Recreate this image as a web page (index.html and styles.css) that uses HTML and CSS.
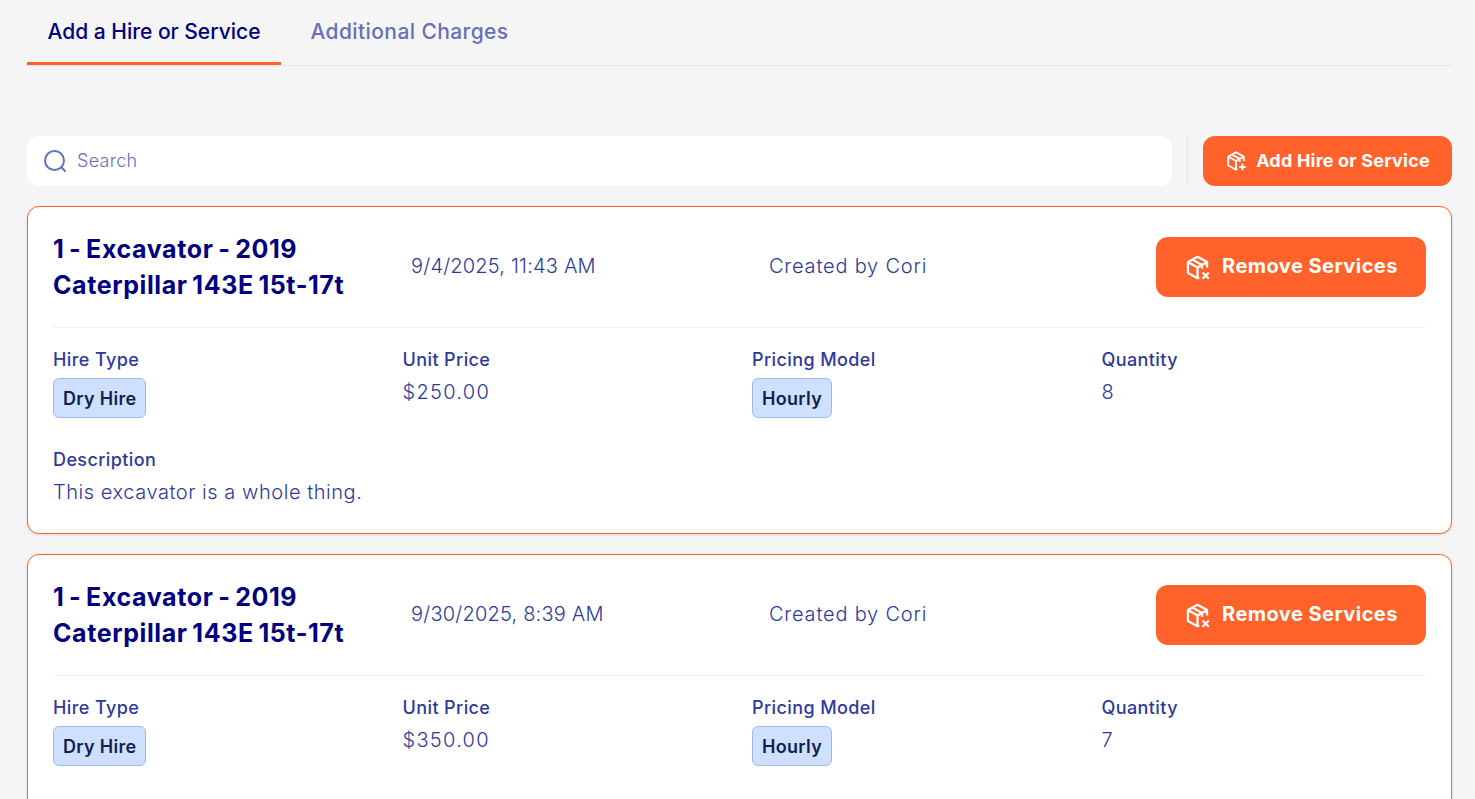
FILE: index.html
```html
<!DOCTYPE html>
<html lang="en">
<head>
<meta charset="utf-8">
<title>Hire or Service</title>
<link rel="stylesheet" href="styles.css">
</head>
<body>
<svg class="defs" width="0" height="0" aria-hidden="true">
  <symbol id="box" viewBox="0 0 24 24">
    <path d="M20.500 12V7.200L12 2.500 3.500 7.200v9.600L12 21.500l1.500-.8M3.800 7.400 12 12l8.400-4.600M12 12v9.300M7.600 5 16 9.700v3.300" fill="none" stroke="currentColor" stroke-width="2" stroke-linejoin="round"/>
  </symbol>
</svg>
<nav class="tabs">
  <a class="tab tab-active">Add a Hire or Service</a>
  <a class="tab">Additional Charges</a>
</nav>
<div class="toolbar">
  <label class="search">
    <svg class="search-icon" viewBox="0 0 24 24"><circle cx="11.500" cy="11.500" r="9.500" fill="none" stroke="currentColor" stroke-width="2"/><path d="M18.500 18.500 22 22" stroke="currentColor" stroke-width="2" stroke-linecap="round"/></svg>
    <span class="search-text">Search</span>
  </label>
  <span class="toolbar-sep"></span>
  <button class="btn btn-small">
    <svg class="icon-small" viewBox="0 0 24 24"><use href="#box"/><path d="M19 15v7M15.500 18.500h7" stroke="currentColor" stroke-width="2"/></svg>
    Add Hire or Service
  </button>
</div>
<article class="card">
  <header class="card-head">
    <h2 class="title">1 - Excavator - 2019 Caterpillar 143E 15t-17t</h2>
    <span class="meta">9/4/2025, 11:43 AM</span>
    <span class="meta meta-author">Created by Cori</span>
    <button class="btn btn-large">
      <svg class="icon-large" viewBox="0 0 24 24"><use href="#box"/><path d="m16.500 16.500 5.500 5.500M22 16.500 16.500 22" stroke="currentColor" stroke-width="2"/></svg>
      Remove Services
    </button>
  </header>
  <div class="fields">
    <div class="field"><span class="label">Hire Type</span><span class="pill">Dry Hire</span></div>
    <div class="field"><span class="label">Unit Price</span><span class="value value-price">$250.00</span></div>
    <div class="field"><span class="label">Pricing Model</span><span class="pill">Hourly</span></div>
    <div class="field"><span class="label">Quantity</span><span class="value">8</span></div>
  </div>
  <div class="field desc"><span class="label">Description</span><span class="value">This excavator is a whole thing.</span></div>
</article>
<article class="card">
  <header class="card-head">
    <h2 class="title">1 - Excavator - 2019 Caterpillar 143E 15t-17t</h2>
    <span class="meta">9/30/2025, 8:39 AM</span>
    <span class="meta meta-author">Created by Cori</span>
    <button class="btn btn-large">
      <svg class="icon-large" viewBox="0 0 24 24"><use href="#box"/><path d="m16.500 16.500 5.500 5.500M22 16.500 16.500 22" stroke="currentColor" stroke-width="2"/></svg>
      Remove Services
    </button>
  </header>
  <div class="fields">
    <div class="field"><span class="label">Hire Type</span><span class="pill">Dry Hire</span></div>
    <div class="field"><span class="label">Unit Price</span><span class="value value-price">$350.00</span></div>
    <div class="field"><span class="label">Pricing Model</span><span class="pill">Hourly</span></div>
    <div class="field"><span class="label">Quantity</span><span class="value">7</span></div>
  </div>
</article>
</body>
</html>
```
FILE: styles.css
```css
* { box-sizing: border-box; }
html, body { height: 799px; overflow: hidden; }
body {
  margin: 0;
  padding: 0 23px 0 27px;
  background: #f5f5f5;
  font-family: Inter, "Liberation Sans", sans-serif;
  color: #2e3a9a;
}
.defs { position: absolute; }
.tabs {
  display: flex;
  height: 66px;
  border-bottom: 1px solid #e5e5e5;
}
.tab {
  height: 65px;
  padding: 20px 20.500px 0;
  font-size: 21px;
  line-height: 24px;
  font-weight: 500;
  letter-spacing: .4px;
  color: #6670b8;
  margin-right: 9px;
}
.tab-active {
  letter-spacing: 0;
  color: #000080;
  border-bottom: 3px solid #ff632b;
}
.toolbar {
  display: flex;
  align-items: stretch;
  height: 50px;
  margin-top: 70px;
}
.search {
  flex: 1;
  display: flex;
  align-items: center;
  gap: 10px;
  padding-left: 16px;
  background: #fff;
  border-radius: 12px;
  color: #6670b8;
}
.search-icon { width: 24px; height: 24px; }
.search-text { font-size: 18px; font-weight: 300; letter-spacing: .3px; padding-bottom: 2px; }
.toolbar-sep {
  width: 1px;
  margin: 0 15px;
  background: #e5e5e5;
}
.btn {
  display: flex;
  align-items: center;
  justify-content: center;
  border: 0;
  padding: 0 0 2px;
  color: #fff;
  background: #ff632b;
  font-family: inherit;
  font-weight: 700;
  white-space: nowrap;
}
.btn-small {
  width: 249px;
  gap: 9px;
  border-radius: 12px;
  font-size: 18px;
  letter-spacing: .2px;
}
.btn-large {
  width: 270px;
  height: 60px;
  gap: 11px;
  border-radius: 12px;
  font-size: 20px;
  letter-spacing: .45px;
  justify-self: end;
}
.icon-small { width: 22px; height: 22px; margin-top: 2px; }
.icon-large { width: 27px; height: 27px; margin-top: 2px; }
.card {
  margin-top: 20px;
  padding: 24px 25px 0;
  height: 328px;
  background: #fff;
  border: 1px solid #ff632b;
  border-radius: 12px;
  box-shadow: 0 1px 3px rgba(0, 0, 0, .12);
}
.card-head {
  display: grid;
  grid-template-columns: 334px 334px 1fr 270px;
  column-gap: 24px;
  align-items: center;
  padding-bottom: 24px;
  border-bottom: 1px solid #f0f0f0;
}
.title {
  margin: 0;
  font-size: 25px;
  line-height: 36px;
  font-weight: 700;
  letter-spacing: .6px;
  word-spacing: -1.800px;
  color: #000080;
}
.meta {
  padding-bottom: 2px;
  font-size: 20px;
  font-weight: 300;
  letter-spacing: .2px;
  color: #2e3a9a;
}
.meta-author { letter-spacing: .8px; }
.fields {
  display: grid;
  grid-template-columns: repeat(4, 1fr);
  column-gap: 25px;
  padding-top: 20px;
}
.field {
  display: flex;
  flex-direction: column;
  align-items: flex-start;
}
.label {
  font-size: 18px;
  line-height: 24px;
  font-weight: 500;
  letter-spacing: .4px;
  color: #2e3a9a;
}
.value {
  margin-top: 6px;
  font-size: 20px;
  line-height: 28px;
  font-weight: 300;
  letter-spacing: .55px;
  color: #2e3a9a;
}
.value-price { letter-spacing: 1.300px; }
.pill {
  margin-top: 6px;
  height: 40px;
  padding: 0 9px;
  display: flex;
  align-items: center;
  background: #cfe0ff;
  border: 1px solid #9fb9ea;
  border-radius: 6px;
  font-size: 18px;
  font-weight: 600;
  letter-spacing: .3px;
  color: #0f1f4f;
}
.desc { margin-top: 30px; }
```
